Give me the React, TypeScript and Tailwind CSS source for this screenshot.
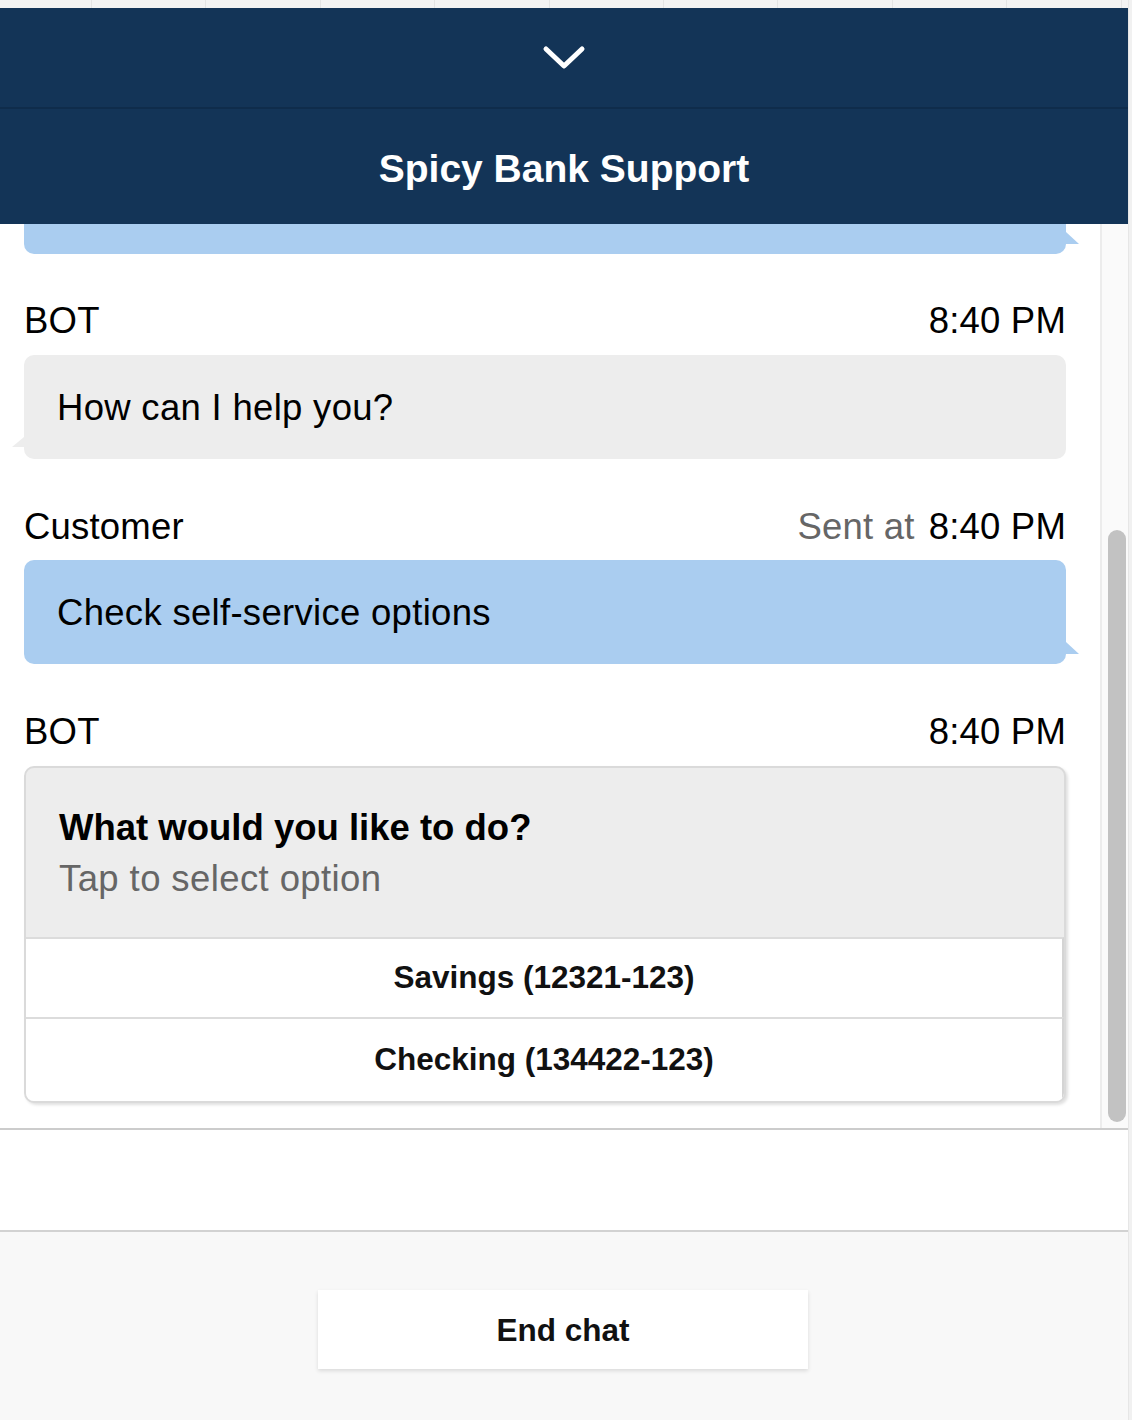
import React from "react";

const font = "font-['Liberation_Sans',Arial,Helvetica,sans-serif]";

function TailRight({ color }: { color: string }) {
  return (
    <svg className="absolute right-[-13px] bottom-[9px]" width="17" height="13" viewBox="0 0 17 13">
      <polygon points="4,0 17,12 0,12" fill={color} />
    </svg>
  );
}

function TailLeft({ color }: { color: string }) {
  return (
    <svg className="absolute left-[-12px] bottom-[10px]" width="17" height="12" viewBox="0 0 17 12">
      <polygon points="12,0 0,10 17,10" fill={color} />
    </svg>
  );
}

function Label({ name, time, sent }: { name: string; time: string; sent?: boolean }) {
  return (
    <div className="flex justify-between h-[40px] leading-[40px] text-[36.5px] tracking-[0.2px] text-black">
      <span>{name}</span>
      <span>
        {sent && <span className="text-[#666666] mr-[14px]">Sent at</span>}
        {time}
      </span>
    </div>
  );
}

export default function App() {
  const gridCells = Array.from({ length: 9 });

  return (
    <div className={`${font} w-[1132px] h-[1420px] bg-[#f3f3f3] flex overflow-hidden`}>
      <div className="w-[1128px] flex flex-col">
        {/* page grid peeking above the widget */}
        <div className="h-[8px] flex shrink-0">
          <div className="w-[92px] border-r border-[#e4e4e4] shrink-0" />
          {gridCells.map((_, i) => (
            <div key={i} className="w-[114.4px] border-r border-[#e4e4e4] shrink-0" />
          ))}
        </div>

        {/* collapse bar */}
        <div className="h-[99px] bg-[#133457] flex items-center justify-center shrink-0">
          <svg width="44" height="26" viewBox="0 0 44 26">
            <polyline
              points="4,4 22,21 40,4"
              fill="none"
              stroke="#ffffff"
              strokeWidth="5"
              strokeLinecap="round"
              strokeLinejoin="round"
            />
          </svg>
        </div>
        <div className="h-[2px] bg-[#0f2c4b] shrink-0" />

        {/* title bar */}
        <div className="h-[115px] bg-[#133457] flex items-center justify-center pt-[3px] shrink-0">
          <h1 className="text-white font-bold text-[39px] leading-none">Spicy Bank Support</h1>
        </div>

        {/* transcript */}
        <div className="h-[904px] flex bg-white shrink-0 overflow-hidden">
          <div className="flex-1 pl-[24px] pr-[34px] flex flex-col">
            <div className="relative h-[30px] bg-[#aacdf0] rounded-b-[10px] shrink-0">
              <TailRight color="#aacdf0" />
            </div>

            <div className="mt-[47px]">
              <Label name="BOT" time="8:40 PM" />
            </div>
            <div className="relative mt-[14px] h-[104px] bg-[#ededed] rounded-[10px] flex items-center pl-[33px] pt-[2px] text-[36.5px] tracking-[0.3px] text-black shrink-0">
              <TailLeft color="#ededed" />
              How can I help you?
            </div>

            <div className="mt-[48px]">
              <Label name="Customer" time="8:40 PM" sent />
            </div>
            <div className="relative mt-[13px] h-[104px] bg-[#aacdf0] rounded-[10px] flex items-center pl-[33px] pt-[2px] text-[36.5px] tracking-[0.3px] text-black shrink-0">
              <TailRight color="#aacdf0" />
              Check self-service options
            </div>

            <div className="mt-[48px]">
              <Label name="BOT" time="8:40 PM" />
            </div>
            <div className="mt-[14px] border-2 border-[#dadada] rounded-[10px] bg-[#ededed] overflow-hidden shadow-[2px_2px_3px_rgba(0,0,0,0.12)] shrink-0">
              <div className="pl-[33px] pt-[40px] pb-[38px]">
                <div className="font-bold text-[36.5px] leading-[40px] text-black">What would you like to do?</div>
                <div className="mt-[11px] text-[36.5px] leading-[40px] tracking-[0.4px] text-[#666666]">Tap to select option</div>
              </div>
              <div className="border-t-2 border-[#dcdcdc] h-[80px] bg-white flex items-center justify-center font-bold text-[31.5px] text-[#111111] border-r-2 border-r-[#d4d4d4]">
                Savings (12321-123)
              </div>
              <div className="border-t-2 border-[#dcdcdc] h-[84px] bg-white flex items-center justify-center font-bold text-[31.5px] text-[#111111] border-r-2 border-r-[#d4d4d4]">
                Checking (134422-123)
              </div>
            </div>
          </div>

          {/* scrollbar */}
          <div className="w-[28px] bg-[#fafafa] border-l-2 border-[#ececec] flex flex-col pt-[306px] pb-[6px] pl-[6px] pr-[2px] shrink-0">
            <div className="flex-1 bg-[#c2c2c2] rounded-full" />
          </div>
        </div>

        <div className="h-[2px] bg-[#cccccc] shrink-0" />
        {/* input area */}
        <div className="h-[100px] bg-white shrink-0" />
        <div className="h-[2px] bg-[#d2d2d2] shrink-0" />

        {/* footer */}
        <div className="flex-1 bg-[#f8f8f8] flex justify-center pt-[58px] pr-[2px]">
          <button className="w-[490px] h-[79px] pt-[3px] bg-white shadow-[0_2px_4px_rgba(0,0,0,0.12)] font-bold text-[31.5px] text-[#111111]">
            End chat
          </button>
        </div>
      </div>
      <div className="w-[4px] bg-[#f1f1f1] border-l border-[#e6e6e6]" />
    </div>
  );
}
